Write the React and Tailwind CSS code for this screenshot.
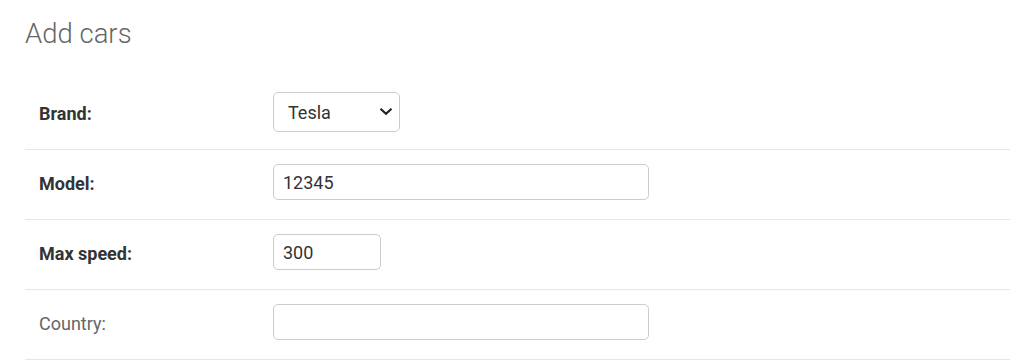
import React, { useState } from "react";

const rows = [
  { label: "Brand:", required: true, kind: "select" },
  { label: "Model:", required: true, kind: "text", value: "12345", width: "w-[376px]" },
  { label: "Max speed:", required: true, kind: "text", value: "300", width: "w-[108px]" },
  { label: "Country:", required: false, kind: "text", value: "", width: "w-[376px]" },
];

const FormRow = ({ row }) => {
  const [value, setValue] = useState(row.value || "");
  const [brand, setBrand] = useState("tesla");

  return (
    <div className="flex items-center h-[70px] pb-[5px] pl-[14px] border-b border-[#e6e6e6]">
      <label
        className={
          "w-[234px] shrink-0 pt-[3px] text-[18px] " +
          (row.required ? "font-bold text-[#333]" : "font-normal text-[#666]")
        }
      >
        {row.label}
      </label>

      {row.kind === "select" ? (
        <div className="relative">
          <select
            value={brand}
            onChange={(e) => setBrand(e.target.value)}
            className="appearance-none w-[127px] h-[40px] pl-[14px] pr-8 text-[18px] text-[#333] bg-white border border-[#ccc] rounded-[5px] outline-none"
          >
            <option value="tesla">Tesla</option>
            <option value="bmw">BMW</option>
            <option value="audi">Audi</option>
          </select>
          {/* chevron */}
          <svg
            className="absolute right-[7px] top-[15px] pointer-events-none"
            width="14"
            height="9"
            viewBox="0 0 14 9"
          >
            <path d="M1.5 1.8 L7 6.8 L12.5 1.8" fill="none" stroke="#222" strokeWidth="2.2" />
          </svg>
        </div>
      ) : (
        <input
          type="text"
          value={value}
          onChange={(e) => setValue(e.target.value)}
          className={
            row.width +
            " h-[36px] px-[9px] text-[18px] text-[#333] bg-white border border-[#ccc] rounded-[5px] outline-none"
          }
        />
      )}
    </div>
  );
};

const App = () => {
  return (
    <div
      className="w-[1010px] h-[360px] bg-white overflow-hidden pl-[25px]"
      style={{ fontFamily: "Roboto, 'Liberation Sans', sans-serif" }}
    >
      <h1 className="text-[27.5px] font-light text-[#666] leading-none pt-[20px] h-[80px]">
        Add cars
      </h1>

      <div>
        {rows.map((row) => (
          <FormRow key={row.label} row={row} />
        ))}
      </div>
    </div>
  );
};

export default App;
